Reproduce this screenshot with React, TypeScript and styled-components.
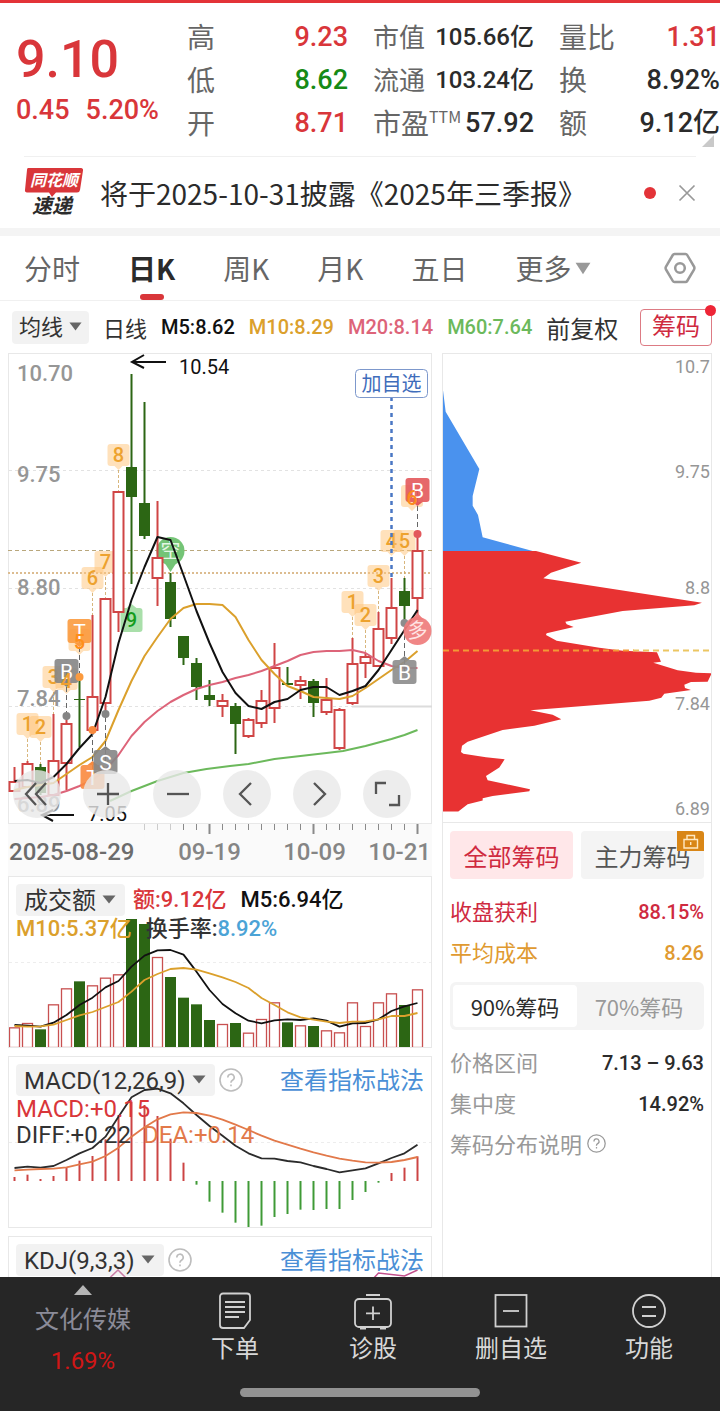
import React from 'react';
import styled, { createGlobalStyle, css } from 'styled-components';

const RED = '#d9363a';
const DEEP_RED = '#cf2a3f';
const GREEN = '#168a16';
const CANDLE_GREEN = '#2c6614';
const CANDLE_RED = '#d04545';
const GOLD = '#dba02c';
const INK = '#2b2b2b';
const LINE = '#e8e8e8';

const numeric = "Roboto, 'Noto Sans CJK SC', sans-serif";
const han = "'Noto Sans CJK SC', sans-serif";

const GlobalStyle = createGlobalStyle`
  *, *::before, *::after { box-sizing: border-box; }
  body { margin: 0; background: #fff; color: ${INK}; font-family: ${numeric}; }
  button, select { font: inherit; color: inherit; border: 0; margin: 0; padding: 0; background: none; cursor: pointer; }
  a { text-decoration: none; }
  h1, p, dl, dt, dd { margin: 0; font-weight: inherit; }
`;

/* ---------- shell ---------- */

const Shell = styled.div`
  display: flex;
  flex-direction: column;
  height: 100vh;
  background: #fff;
`;

const Scroller = styled.main`
  flex: 1;
  min-height: 0;
  overflow-y: auto;
  overflow-x: hidden;
  scrollbar-width: none;
  border-top: 3px solid #e33338;
`;

/* ---------- quote ---------- */

const Quote = styled.section`
  position: relative;
  display: grid;
  grid-template-columns: 146fr 161fr 161fr 161fr;
  column-gap: 25px;
  padding: 12px 0 12px 16px;
`;

const PriceBlock = styled.div`
  display: flex;
  flex-direction: column;
  gap: 4px;
  padding-top: 15px;
  color: ${RED};
  font-weight: 500;
  white-space: nowrap;
`;

const Price = styled.h1`
  font-size: 52px;
  line-height: 60px;
  font-weight: 500;
`;

const Change = styled.p`
  display: flex;
  gap: 16px;
  font-size: 27px;
  line-height: 32px;
`;

const StatList = styled.dl`
  min-width: 0;
`;

const Stat = styled.div`
  display: flex;
  justify-content: space-between;
  align-items: center;
  height: 43px;
  white-space: nowrap;
`;

const StatLabel = styled.dt<{ $compact?: boolean }>`
  padding-bottom: 2px;
  font-family: ${han};
  font-size: ${p => (p.$compact ? 26 : 28)}px;
  line-height: 40px;
  color: #666;
  display: flex;
`;

const Sup = styled.sup`
  font-size: 16px;
  line-height: 28px;
  vertical-align: top;
`;

const StatValue = styled.dd<{ $color?: string; $compact?: boolean }>`
  font-size: ${p => (p.$compact ? 24 : 27)}px;
  line-height: 40px;
  font-weight: 500;
  color: ${p => p.$color ?? INK};
`;

const Corner = styled.svg`
  position: absolute;
  right: 6px;
  bottom: 9px;
`;

/* ---------- news ---------- */

const News = styled.section`
  display: flex;
  align-items: center;
  height: 72px;
  margin: 0 24px;
  border-top: 1px solid #f0f0f0;
`;

const NewsLink = styled.a`
  flex: 1;
  min-width: 0;
  margin-left: 16px;
  font-family: ${han};
  font-size: 28px;
  line-height: 40px;
  color: ${INK};
  white-space: nowrap;
  overflow: hidden;
`;

const UnreadDot = styled.span`
  width: 12px;
  height: 12px;
  border-radius: 50%;
  background: #e33338;
`;

const CloseButton = styled.button`
  display: flex;
  margin-left: 22px;
`;

const Band = styled.div`
  height: 8px;
  background: #f4f4f4;
`;

/* ---------- tabs ---------- */

const Tabs = styled.nav`
  display: flex;
  align-items: center;
  gap: 48px;
  height: 65px;
  padding: 0 24px;
  border-bottom: 1px solid #f0f0f0;
`;

const Tab = styled.button<{ $active?: boolean }>`
  position: relative;
  display: flex;
  align-items: center;
  gap: 4px;
  height: 64px;
  font-family: ${han};
  font-size: 28px;
  white-space: nowrap;
  color: ${p => (p.$active ? INK : '#666')};
  font-weight: ${p => (p.$active ? 700 : 400)};
  ${p =>
    p.$active &&
    css`
      &::after {
        content: '';
        position: absolute;
        left: 50%;
        bottom: 0;
        width: 24px;
        height: 6px;
        margin-left: -12px;
        border-radius: 3px;
        background: ${RED};
      }
    `}
`;

const SettingsButton = styled.button`
  display: flex;
  margin-left: auto;
`;

/* ---------- moving average legend ---------- */

const Legend = styled.div`
  display: flex;
  align-items: center;
  gap: 14px;
  height: 52px;
  padding: 0 8px 0 12px;
  white-space: nowrap;
`;

const LegendValue = styled.span<{ $color: string }>`
  font-size: 20px;
  font-weight: 500;
  color: ${p => p.$color};
`;

const LegendText = styled.span<{ $large?: boolean }>`
  font-size: ${p => (p.$large ? 24 : 22)}px;
  color: #333;
`;

const SelectWrap = styled.label<{ $small?: boolean }>`
  position: relative;
  display: inline-flex;
  flex: none;
  & > select {
    appearance: none;
    height: ${p => (p.$small ? 33 : 32)}px;
    padding: ${p => (p.$small ? '2px 25px 0 7px' : '2px 29px 0 8px')};
    border-radius: 4px;
    background: rgba(0, 0, 0, 0.05);
    font-size: ${p => (p.$small ? 22 : 24)}px;
    line-height: 30px;
    color: #333;
  }
  & > svg {
    position: absolute;
    right: ${p => (p.$small ? 7 : 9)}px;
    top: 11px;
    pointer-events: none;
  }
`;

const ChipsToggle = styled.button`
  position: relative;
  flex: none;
  width: 72px;
  height: 37px;
  margin-left: auto;
  border: 1px solid #dd7b84;
  border-radius: 4px;
  font-size: 24px;
  line-height: 34px;
  color: ${DEEP_RED};
  &::after {
    content: '';
    position: absolute;
    top: -5px;
    right: -5px;
    width: 11px;
    height: 11px;
    border-radius: 50%;
    background: #ee2536;
  }
`;

/* ---------- charts ---------- */

const Board = styled.div`
  display: grid;
  grid-template-columns: minmax(0, 424fr) minmax(0, 270fr);
  column-gap: 10px;
  align-items: stretch;
  padding: 0 8px;
`;

const ChartColumn = styled.div`
  display: flex;
  flex-direction: column;
`;

const Stack = styled.section<{ $framed?: boolean }>`
  display: grid;
  & > * {
    grid-area: 1 / 1;
    min-width: 0;
  }
  ${p =>
    p.$framed &&
    css`
      margin-bottom: 8px;
      outline: 1px solid ${LINE};
      outline-offset: -1px;
    `}
`;

const ChartSvg = styled.svg`
  display: block;
  width: 100%;
  height: auto;
  font-family: ${numeric};
`;

const ToolRow = styled.div`
  align-self: start;
  display: flex;
  gap: 22px;
  padding: 417px 0 0 5px;
`;

const ToolButton = styled.button`
  display: flex;
  align-items: center;
  justify-content: center;
  width: 48px;
  height: 48px;
  border-radius: 50%;
  background: rgba(232, 232, 232, 0.8);
`;

const PanelHead = styled.div`
  align-self: start;
  padding: 8px 8px 0;
  white-space: nowrap;
`;

const HeadRow = styled.div<{ $gap?: number }>`
  display: flex;
  align-items: center;
  gap: ${p => p.$gap ?? 8}px;
`;

const Reading = styled.span<{ $color: string; $large?: boolean }>`
  font-size: ${p => (p.$large ? 24 : 22)}px;
  line-height: 26px;
  font-weight: ${p => (p.$large ? 400 : 500)};
  color: ${p => p.$color};
`;

const HelpButton = styled.button`
  display: flex;
  margin-left: -4px;
`;

const GuideLink = styled.a`
  margin-left: auto;
  padding-top: 2px;
  font-size: 24px;
  line-height: 30px;
  color: #4a8fd6;
`;

/* ---------- chip distribution ---------- */

const ChipColumn = styled.aside`
  border: solid ${LINE};
  border-width: 0 1px;
`;

const ChipBody = styled.div`
  padding: 8px 7px;
`;

const ChipTabs = styled.div`
  display: flex;
  gap: 8px;
  margin-bottom: 12px;
`;

const ChipTab = styled.button<{ $active?: boolean }>`
  position: relative;
  flex: 1;
  height: 48px;
  border-radius: 4px;
  font-size: 24px;
  white-space: nowrap;
  color: ${p => (p.$active ? DEEP_RED : '#555')};
  background: ${p => (p.$active ? '#ffe7e9' : '#f4f4f4')};
`;

const LockBadge = styled.svg`
  position: absolute;
  top: 0;
  right: 0;
`;

const Fact = styled.div<{ $color: string }>`
  display: flex;
  align-items: center;
  justify-content: space-between;
  height: 41px;
  color: ${p => p.$color};
  white-space: nowrap;
`;

const FactLabel = styled.dt`
  padding-bottom: 4px;
  font-family: ${han};
  font-size: 22px;
`;

const FactValue = styled.dd<{ $dark?: boolean }>`
  font-size: 20px;
  font-weight: 500;
  ${p => p.$dark && `color: ${INK};`}
`;

const Segments = styled.div`
  display: flex;
  height: 48px;
  margin: 9px 0 12px;
  padding: 3px;
  border-radius: 6px;
  background: #f4f4f4;
`;

const Segment = styled.button<{ $active?: boolean }>`
  flex: 1;
  border-radius: 4px;
  font-family: ${han};
  font-size: 22px;
  white-space: nowrap;
  color: ${p => (p.$active ? INK : '#999')};
  background: ${p => (p.$active ? '#fff' : 'transparent')};
`;

const Explain = styled.button`
  display: flex;
  align-items: center;
  gap: 5px;
  height: 41px;
  padding-bottom: 3px;
  font-family: ${han};
  font-size: 22px;
  color: #999;
  white-space: nowrap;
`;

/* ---------- bottom bar ---------- */

const BottomBar = styled.footer`
  background: #262626;
  padding-bottom: 14px;
`;

const Actions = styled.nav`
  display: grid;
  grid-template-columns: 166fr 138fr 138fr 138fr 138fr 2fr;
  height: 111px;
`;

const Sector = styled.button`
  display: flex;
  flex-direction: column;
  align-items: center;
  padding-top: 8px;
  color: #8b8b98;
  font-size: 24px;
`;

const SectorName = styled.span`
  line-height: 32px;
  margin-top: 9px;
`;

const SectorChange = styled.span`
  line-height: 32px;
  margin-top: 9px;
  color: #d01616;
`;

const Action = styled.button`
  display: flex;
  flex-direction: column;
  align-items: center;
  gap: 2px;
  padding-top: 14px;
  color: #d8d8d8;
  font-size: 24px;
  line-height: 32px;
`;

const HomeIndicator = styled.div`
  width: 240px;
  height: 9px;
  margin: 0 auto;
  border-radius: 5px;
  background: #929292;
`;

/* ---------- small pieces ---------- */

const Caret = ({ width = 14, height = 9, color = '#666' }) => (
  <svg width={width} height={height} viewBox="0 0 14 9" preserveAspectRatio="none" aria-hidden="true">
    <path d="M0.5 0.5H13.5L7 8.5Z" fill={color} />
  </svg>
);

const Help = ({ size = 24, color = '#bdbdbd' }) => (
  <svg width={size} height={size} viewBox="0 0 24 24" fill="none" stroke={color} strokeWidth="1.6" aria-hidden="true">
    <circle cx="12" cy="12" r="11" />
    <path d="M8.8 9.4a3.2 3.2 0 1 1 4.7 2.8c-1 .6-1.5 1.100-1.500 2.100v.5" />
    <path d="M12 16.500v1.800" />
  </svg>
);

type PickerProps = { label: string; options: string[]; small?: boolean };

const Picker = ({ label, options, small }: PickerProps) => (
  <SelectWrap $small={small}>
    <select aria-label={label}>
      {options.map(o => (
        <option key={o}>{o}</option>
      ))}
    </select>
    <Caret width={small ? 13 : 14} />
  </SelectWrap>
);

/* ---------- candle chart ---------- */

const STEP = 13;
const cx = (i: number) => 14.5 + STEP * i;

// [rising, high, body top, body bottom, low]
const candles: [0 | 1, number, number, number, number][] = [
  [1, 767, 782, 791, 791], [1, 761, 764, 787, 787], [0, 764, 767, 793, 795], [1, 714, 761, 795, 795],
  [1, 714, 724, 763, 790], [0, 676, 699, 700, 747], [1, 615, 697, 730, 732], [1, 598, 599, 703, 714],
  [1, 491, 492, 612, 632], [0, 374, 467, 497, 584], [0, 402, 503, 536, 539], [1, 501, 558, 578, 606],
  [0, 573, 582, 619, 627], [0, 636, 636, 658, 665], [0, 658, 663, 687, 700], [0, 680, 695, 700, 706],
  [1, 694, 701, 706, 717], [0, 703, 706, 724, 754], [1, 718, 720, 736, 738], [1, 690, 701, 723, 728],
  [1, 643, 668, 708, 723], [0, 667, 683, 685, 685], [1, 676, 681, 685, 699], [0, 679, 681, 703, 717],
  [1, 678, 700, 712, 715], [1, 708, 710, 748, 750], [1, 638, 664, 703, 705], [1, 653, 657, 663, 678],
  [1, 612, 629, 666, 666], [1, 578, 608, 638, 644], [0, 578, 591, 606, 625], [1, 534, 551, 598, 620],
];

const ma5 = [781, 780, 783, 777, 764, 748, 734, 697, 643, 600, 567, 537, 540, 575, 611, 643, 672, 693, 706, 709, 702, 699, 690, 687, 687, 695, 691, 686, 670, 650, 630, 610];
const ma10 = [790, 787, 785, 783, 774, 765, 757, 741, 710, 681, 656, 637, 619, 608, 604, 604, 605, 617, 640, 660, 674, 686, 691, 697, 698, 699, 696, 688, 679, 670, 662, 651];
const ma20 = [799, 798, 797, 795, 791, 786, 780, 770, 755, 736, 722, 711, 702, 695, 689, 685, 682, 678, 675, 671, 666, 661, 655, 652, 651, 651, 650, 653, 661, 666, 668, 668];

const linePoints = (values: number[]) => values.map((v, i) => `${cx(i)},${v}`).join(' ');

type LabelProps = { x: number; y: number; size?: number; color: string; anchor?: 'start' | 'middle' | 'end'; weight?: number; children: string };

const Label = ({ x, y, size = 22, color, anchor = 'start', weight = 400, children }: LabelProps) => (
  <text x={x} y={y + Math.round(size * 0.36)} fontSize={size} fill={color} textAnchor={anchor} fontWeight={weight}>
    {children}
  </text>
);

const CountTag = ({ x, y, n, to }: { x: number; y: number; n?: string; to?: number }) => (
  <g>
    {to && <path d={`M${x} ${y + 15}V${to}`} stroke="#cfa45c" strokeDasharray="3 2" opacity="0.8" />}
    <path
      d={`M${x - 8} ${y - 11}h16a3 3 0 0 1 3 3v16a3 3 0 0 1-3 3h-4l-4 4l-4-4h-4a3 3 0 0 1-3-3v-16a3 3 0 0 1 3-3z`}
      fill="#ffc478"
      fillOpacity="0.5"
    />
    {n && <Label x={x} y={y} size={20} color="#eda22e" anchor="middle" weight={500}>{n}</Label>}
  </g>
);

type TradeProps = { x: number; y: number; mark: string; color: string; dot: number; up?: boolean };

const TradeTag = ({ x, y, mark, color, dot, up }: TradeProps) => (
  <g>
    <path d={`M${x} ${y}V${dot}`} stroke="#666" strokeDasharray="5 3" />
    <circle cx={x} cy={dot} r="4" fill={color} />
    <rect x={x - 12} y={y - 12} width="24" height="24" rx="3" fill={color} fillOpacity="0.9" />
    <path d={up ? `M${x - 5} ${y - 12}l5-4l5 4z` : `M${x - 5} ${y + 12}l5 4l5-4z`} fill={color} />
    <Label x={x} y={y} size={21} color="#fff" anchor="middle">{mark}</Label>
  </g>
);

const axis: [string, number][] = [['10.70', 373], ['9.75', 474], ['8.80', 587], ['7.84', 698], ['6.89', 804]];

const CandleChart = () => (
  <ChartSvg viewBox="8 353 424 523" role="img" aria-label="日K线图">
    <rect x="8" y="824" width="424" height="52" fill="#fafafa" />
    <rect x="8.500" y="353.500" width="423" height="470" fill="#fff" stroke={LINE} />
    <g stroke="#e2e2e2" strokeDasharray="3 3">
      <path d="M9 470.500H432" />
      <path d="M9 588.500H432" />
      <path d="M9 706.500H352" />
    </g>
    <path d="M352 706.500H432" stroke="#dcdcdc" strokeWidth="2" />
    <path d="M8 550.500H432" stroke="#b9a77c" strokeDasharray="4 3" />
    <path d="M8 573H432" stroke="#dcbc90" strokeWidth="2" strokeDasharray="2 2" />
    {axis.map(([t, y]) => (
      <Label key={t} x={17} y={y} color="#969696" weight={500}>{t}</Label>
    ))}

    <CountTag x={27.5} y={724} n="1" to={761} />
    <CountTag x={40.5} y={727} n="2" to={764} />
    <CountTag x={53.5} y={677} n="3" to={714} />
    <CountTag x={92.5} y={578} n="6" to={615} />
    <CountTag x={105.5} y={562} n="7" to={598} />
    <CountTag x={118.5} y={455} n="8" to={491} />
    <CountTag x={352.5} y={602} n="1" to={638} />
    <CountTag x={365.5} y={615} n="2" to={653} />
    <CountTag x={378.5} y={576} n="3" to={612} />
    <CountTag x={391.5} y={541} n="4" />
    <CountTag x={404.5} y={541} n="5" to={578} />
    <path d="M391.500 397V578" stroke="#4a77c4" strokeWidth="2.500" strokeDasharray="4 4" />

    <g>
      <path d="M131.500 604l5 4h3a3 3 0 0 1 3 3v18a3 3 0 0 1-3 3h-16a3 3 0 0 1-3-3v-18a3 3 0 0 1 3-3h3z" fill="#a9dfaa" />
      <Label x={131.5} y={620} size={20} color="#139c1c" anchor="middle" weight={500}>9</Label>
    </g>
    <g>
      <path d="M164 562h13l-6.500 10z" fill="#74c476" />
      <circle cx="170.500" cy="551" r="14" fill="#74c476" />
      <text x="170.500" y="558" fontSize="20" fill="#e4f6e4" textAnchor="middle">空</text>
    </g>

    {candles.map(([rising, high, top, bottom, low], i) => {
      const color = rising ? CANDLE_RED : CANDLE_GREEN;
      return (
        <g key={i} stroke={color} strokeWidth="2">
          <path d={`M${cx(i)} ${high}V${top}M${cx(i)} ${bottom}V${low}`} />
          {rising ? (
            <rect x={cx(i) - 5} y={top} width="10" height={bottom - top} fill="#fff" />
          ) : (
            <rect x={cx(i) - 5.5} y={top} width="11" height={bottom - top} fill={color} stroke="none" />
          )}
        </g>
      );
    })}

    <g fill="none" strokeWidth="2" strokeLinejoin="round">
      <polyline points="110,801 131.500,791 157.500,781 183.500,773 206.500,769 230,766 248.500,764 274.500,759 300.500,756 326.500,753 343,751 365.500,746 391.500,739 404.500,735 417.500,730" stroke="#6cb95c" />
      <polyline points={linePoints(ma20)} stroke="#dd6479" />
      <polyline points={linePoints(ma10)} stroke={GOLD} />
      <polyline points={linePoints(ma5)} stroke="#111" />
    </g>

    <CountTag x={66.5} y={679} />
    <CountTag x={79.5} y={640} />
    <CountTag x={412} y={496} />
    <TradeTag x={66.5} y={671} mark="B" color="#858585" dot={716} />
    <TradeTag x={79.5} y={631} mark="T" color="#fb9a3e" dot={677} />
    <TradeTag x={92.5} y={777} mark="T" color="#f98a3e" dot={730} up />
    <TradeTag x={105.5} y={762} mark="S" color="#858585" dot={714} up />
    <TradeTag x={404.5} y={672} mark="B" color="#8c8c8c" dot={623} up />
    <TradeTag x={417.5} y={490} mark="B" color="#e3585b" dot={534} />
    <Label x={66.5} y={681} size={20} color="#f0a030" anchor="middle" weight={500}>4</Label>
    <Label x={79.5} y={642} size={20} color="#ff8f1a" anchor="middle" weight={500}>5</Label>
    <Label x={412} y={498} size={20} color="#fb8b1e" anchor="middle" weight={500}>6</Label>
    <g>
      <path d="M411 620l6.500-7l6.500 7z" fill="#ef8080" />
      <circle cx="417.500" cy="631" r="14" fill="#ef7c7c" fillOpacity="0.92" />
      <text x="417.500" y="638" fontSize="20" fill="#ffe4e4" textAnchor="middle">多</text>
    </g>

    <rect x="355.500" y="369.500" width="72" height="28" rx="4" fill="#fff" stroke="#7d98cc" />
    <text x="391.500" y="391" fontSize="20" fill="#3f6dbb" textAnchor="middle">加自选</text>

    <g stroke="#111" strokeWidth="2" fill="none">
      <path d="M166 362H132M144 355L132 362L144 368" />
      <path d="M74 815H42M53 810L42 815L53 821" />
    </g>
    <Label x={179} y={367} size={20} color="#111">10.54</Label>
    <Label x={88} y={814} size={20} color="#111">7.05</Label>

    {candles.map((_, i) =>
      i < 10 ? null : (
        <path
          key={i}
          d={`M${cx(i)} 824v${(i - 15) % 8 === 0 ? 10 : 6}`}
          stroke={i < 13 ? '#ccc' : '#8a8a8a'}
          strokeWidth={(i - 15) % 8 === 0 ? 2 : 1}
        />
      ),
    )}
    <Label x={9} y={851} size={24} color="#6c6c6c" weight={500}>2025-08-29</Label>
    <Label x={209.5} y={851} size={24} color="#858585" anchor="middle" weight={500}>09-19</Label>
    <Label x={314.5} y={851} size={24} color="#858585" anchor="middle" weight={500}>10-09</Label>
    <Label x={431} y={851} size={24} color="#858585" anchor="end" weight={500}>10-21</Label>
  </ChartSvg>
);

/* ---------- indicator charts ---------- */

// Indicator series are kept at three steps per chart unit.
const unit = (v: number) => v / 3;
const seriesPoints = (values: number[]) => values.map((v, i) => `${cx(i)},${unit(v)}`).join(' ');

const turnover = [472, 459, 478, 403, 355, 334, 346, 323, 313, 147, 162, 261, 321, 383, 403, 450, 462, 459, 488, 447, 397, 457, 466, 468, 481, 487, 397, 468, 397, 370, 405, 358];
const turnoverM5 = [465, 467, 470, 458, 435, 405, 383, 352, 333, 290, 257, 241, 240, 254, 305, 360, 402, 430, 452, 460, 451, 448, 450, 445, 452, 470, 460, 459, 448, 423, 409, 399];
const turnoverM10 = [468, 470, 469, 464, 450, 436, 426, 411, 396, 365, 330, 312, 297, 294, 299, 310, 322, 336, 354, 384, 405, 427, 442, 449, 455, 459, 455, 454, 448, 438, 438, 429];

const VolumeChart = () => (
  <ChartSvg viewBox="8 6 424 172" role="img" aria-label="成交额">
    <path d="M9 92.500H432" stroke="#ededed" strokeDasharray="3 3" />
    {turnover.map((v, i) =>
      candles[i][0] ? (
        <rect key={i} x={cx(i) - 5} y={unit(v) + 0.5} width="10" height={177 - unit(v)} fill="#fff" stroke="#c85050" strokeWidth="1.300" />
      ) : (
        <rect key={i} x={cx(i) - 5.5} y={unit(v)} width="11" height={178 - unit(v)} fill={CANDLE_GREEN} />
      ),
    )}
    <g fill="none" strokeWidth="1.800" strokeLinejoin="round">
      <polyline points={seriesPoints(turnoverM5)} stroke="#111" />
      <polyline points={seriesPoints(turnoverM10)} stroke={GOLD} />
    </g>
  </ChartSvg>
);

const macd = [921, 914, 927, 918, 893, 872, 858, 808, 735, 695, 705, 738, 806, 878, 944, 995, 1028, 1058, 1072, 1067, 1041, 1032, 1019, 1020, 1017, 1017, 990, 966, 938, 909, 893, 859];
const diff = [894, 890, 893, 888, 870, 850, 834, 800, 740, 682, 660, 656, 670, 700, 735, 768, 797, 827, 850, 865, 866, 873, 877, 888, 897, 907, 901, 895, 880, 864, 850, 824];
const dea = [901, 899, 897, 896, 892, 883, 875, 858, 833, 800, 772, 748, 733, 727, 729, 737, 749, 764, 780, 797, 812, 824, 836, 847, 857, 866, 872, 877, 878, 876, 870, 861];
const MACD_ZERO = 933;

const MacdChart = () => (
  <ChartSvg viewBox="8 186 424 172" role="img" aria-label="MACD">
    <path d="M9 272.500H432" stroke="#ededed" strokeDasharray="3 3" />
    {macd.map((v, i) => (
      <path
        key={i}
        d={`M${cx(i)} ${unit(MACD_ZERO)}V${unit(v)}`}
        stroke={v < MACD_ZERO ? '#cc4444' : '#3f9a36'}
        strokeWidth="2"
      />
    ))}
    <g fill="none" strokeWidth="1.800" strokeLinejoin="round">
      <polyline points={seriesPoints(diff)} stroke="#2b2b2b" />
      <polyline points={seriesPoints(dea)} stroke="#e2794a" />
    </g>
  </ChartSvg>
);

const KdjChart = () => (
  <ChartSvg viewBox="8 366 424 172" role="img" aria-label="KDJ">
    <g fill="none" stroke="#c2508c" strokeWidth="1.500">
      <path d="M105.500 412L118 400L130 412" opacity="0.7" />
      <path d="M372 410L378.500 403L404.500 406L417.500 400" />
    </g>
  </ChartSvg>
);

/* ---------- chip distribution chart ---------- */

const chipAxis: [string, number][] = [['10.7', 367], ['9.75', 472], ['8.8', 588], ['7.84', 704], ['6.89', 809]];

const ChipChart = () => (
  <ChartSvg viewBox="443 353 268 470" role="img" aria-label="筹码分布">
    <path d="M443 353.500H711M443 822.500H711" stroke={LINE} />
    <g transform="translate(436 350) scale(0.3333)">
      <path d="M19 105L29 185L130 357L110 438V467L126 495L140 562L290 603H19Z" fill="#4a92ee" />
      <path
        d="M19 603H300L436 638L345 668L322 685L798 758L775 766L560 783L388 815L392 823L413 831L332 850L330 855L362 872L490 893L560 902L663 907L675 935L652 938L725 961L780 968L827 970L815 995L765 996L745 1004L747 1014L765 1020L685 1031L676 1043L640 1052L283 1081L350 1094L376 1108L295 1127L200 1140L95 1175L78 1187L75 1206L82 1211L150 1222L206 1228L190 1253L150 1278L155 1291L282 1318L280 1324L170 1338L140 1345V1352L95 1363L67 1385H19Z"
        fill="#e83232"
      />
    </g>
    <path d="M443 650.500H634" stroke="#f39a35" strokeWidth="2" strokeDasharray="6 4" />
    <path d="M633 650.500H711" stroke="#ecc662" strokeWidth="2" strokeDasharray="6 4" />
    {chipAxis.map(([t, y]) => (
      <Label key={t} x={710} y={y} size={18} color="#969696" anchor="end">{t}</Label>
    ))}
  </ChartSvg>
);

/* ---------- page ---------- */

const toolIcons: [string, string][] = [
  ['最早', 'M23 13L13 24L23 35M33 13L23 24L33 35'],
  ['放大', 'M25 13V35M14 24H36'],
  ['缩小', 'M14 24H36'],
  ['左移', 'M28 13L17 24L28 35'],
  ['右移', 'M21 13L32 24L21 35'],
  ['全屏', 'M13 24V13H23M36 25V35H26'],
];

const stats: { label: string; sup?: string; value: string; color?: string; compact?: boolean }[][] = [
  [
    { label: '高', value: '9.23', color: RED },
    { label: '低', value: '8.62', color: GREEN },
    { label: '开', value: '8.71', color: RED },
  ],
  [
    { label: '市值', value: '105.66亿', compact: true },
    { label: '流通', value: '103.24亿', compact: true },
    { label: '市盈', sup: 'TTM', value: '57.92' },
  ],
  [
    { label: '量比', value: '1.31', color: RED },
    { label: '换', value: '8.92%' },
    { label: '额', value: '9.12亿' },
  ],
];

export default function App() {
  return (
    <Shell>
      <GlobalStyle />
      <Scroller>
        <Quote>
          <PriceBlock>
            <Price>9.10</Price>
            <Change>
              <span>0.45</span>
              <span>5.20%</span>
            </Change>
          </PriceBlock>
          {stats.map((group, i) => (
            <StatList key={i}>
              {group.map(s => (
                <Stat key={s.label}>
                  <StatLabel $compact={s.compact}>
                    {s.label}
                    {s.sup && <Sup>{s.sup}</Sup>}
                  </StatLabel>
                  <StatValue $color={s.color} $compact={s.compact}>{s.value}</StatValue>
                </Stat>
              ))}
            </StatList>
          ))}
          <Corner width="12" height="12" aria-hidden="true">
            <path d="M12 0V12H0Z" fill="#c9c9c9" />
          </Corner>
        </Quote>

        <News>
          <svg width="60" height="56" viewBox="0 0 60 56" role="img" aria-label="同花顺速递">
            <path d="M4 3H57a2 2 0 0 1 2 2.500L56 25a3 3 0 0 1-3 2.500H32L28 32L25 27.500H3a2 2 0 0 1-2-2.500L3 5a2 2 0 0 1 1-2z" fill={RED} />
            <text x="30" y="21" fontFamily={han} fontSize="16" fontWeight="700" fontStyle="italic" fill="#fff" textAnchor="middle">同花顺</text>
            <text x="28" y="48" fontFamily={han} fontSize="20" fontWeight="700" fontStyle="italic" fill={INK} textAnchor="middle">速递</text>
          </svg>
          <NewsLink href="#news">将于2025-10-31披露《2025年三季报》</NewsLink>
          <UnreadDot />
          <CloseButton aria-label="关闭">
            <svg width="18" height="18" fill="none" stroke="#999" strokeWidth="1.700">
              <path d="M1.500 1.500L16.500 16.500M16.500 1.500L1.500 16.500" />
            </svg>
          </CloseButton>
        </News>
        <Band />

        <Tabs>
          <Tab>分时</Tab>
          <Tab $active aria-current="page">日K</Tab>
          <Tab>周K</Tab>
          <Tab>月K</Tab>
          <Tab>五日</Tab>
          <Tab aria-haspopup="menu">
            更多
            <Caret width={16} height={13} color="#999" />
          </Tab>
          <SettingsButton aria-label="设置">
            <svg width="32" height="32" viewBox="0 0 32 32" fill="none" stroke="#999" strokeWidth="2.500" strokeLinejoin="round">
              <path d="M10.500 2H21.500a2 2 0 0 1 1.700 1L30 14.500a3 3 0 0 1 0 3L23.200 29a2 2 0 0 1-1.700 1H10.500a2 2 0 0 1-1.700-1L2 17.500a3 3 0 0 1 0-3L8.800 3a2 2 0 0 1 1.700-1z" />
              <circle cx="16" cy="16" r="4.800" />
            </svg>
          </SettingsButton>
        </Tabs>

        <Legend>
          <Picker small label="主图指标" options={['均线']} />
          <LegendText>日线</LegendText>
          <LegendValue $color="#111">M5:8.62</LegendValue>
          <LegendValue $color={GOLD}>M10:8.29</LegendValue>
          <LegendValue $color="#dd6479">M20:8.14</LegendValue>
          <LegendValue $color="#6cb95c">M60:7.64</LegendValue>
          <LegendText $large>前复权</LegendText>
          <ChipsToggle aria-pressed="true">筹码</ChipsToggle>
        </Legend>

        <Board>
          <ChartColumn>
            <Stack>
              <CandleChart />
              <ToolRow>
                {toolIcons.map(([name, d]) => (
                  <ToolButton key={name} aria-label={name}>
                    <svg width="48" height="48" fill="none" stroke="#555" strokeWidth="2.300">
                      <path d={d} />
                    </svg>
                  </ToolButton>
                ))}
              </ToolRow>
            </Stack>

            <Stack $framed>
              <VolumeChart />
              <PanelHead>
                <HeadRow>
                  <Picker label="副图指标一" options={['成交额']} />
                  <HeadRow $gap={14}>
                    <Reading $color={RED}>额:9.12亿</Reading>
                    <Reading $color="#111">M5:6.94亿</Reading>
                  </HeadRow>
                </HeadRow>
                <HeadRow $gap={14}>
                  <Reading $color={GOLD}>M10:5.37亿</Reading>
                  <HeadRow $gap={0}>
                    <Reading $color="#333">换手率:</Reading>
                    <Reading $color="#4ba3d6">8.92%</Reading>
                  </HeadRow>
                </HeadRow>
              </PanelHead>
            </Stack>

            <Stack $framed>
              <MacdChart />
              <PanelHead>
                <HeadRow>
                  <Picker label="副图指标二" options={['MACD(12,26,9)']} />
                  <HelpButton aria-label="MACD说明"><Help /></HelpButton>
                  <GuideLink href="#macd">查看指标战法</GuideLink>
                </HeadRow>
                <HeadRow>
                  <Reading $large $color={RED}>MACD:+0.15</Reading>
                </HeadRow>
                <HeadRow $gap={12}>
                  <Reading $large $color="#333">DIFF:+0.22</Reading>
                  <Reading $large $color="#e2794a">DEA:+0.14</Reading>
                </HeadRow>
              </PanelHead>
            </Stack>

            <Stack $framed>
              <KdjChart />
              <PanelHead>
                <HeadRow>
                  <Picker label="副图指标三" options={['KDJ(9,3,3)']} />
                  <HelpButton aria-label="KDJ说明"><Help /></HelpButton>
                  <GuideLink href="#kdj">查看指标战法</GuideLink>
                </HeadRow>
              </PanelHead>
            </Stack>
          </ChartColumn>

          <ChipColumn>
            <ChipChart />
            <ChipBody>
              <ChipTabs>
                <ChipTab $active aria-pressed="true">全部筹码</ChipTab>
                <ChipTab aria-pressed="false">
                  主力筹码
                  <LockBadge width="27" height="20" aria-hidden="true">
                    <path d="M0 0H24a3 3 0 0 1 3 3V20H0Z" fill="#d98616" />
                    <path d="M7 8.500H20.500V17H7ZM10 8V4.500H17.500V8M13.700 11V14" fill="none" stroke="#ffe9c2" strokeWidth="1.400" />
                  </LockBadge>
                </ChipTab>
              </ChipTabs>
              <dl>
                <Fact $color={DEEP_RED}>
                  <FactLabel>收盘获利</FactLabel>
                  <FactValue>88.15%</FactValue>
                </Fact>
                <Fact $color="#e09a30">
                  <FactLabel>平均成本</FactLabel>
                  <FactValue>8.26</FactValue>
                </Fact>
              </dl>
              <Segments>
                <Segment $active aria-pressed="true">90%筹码</Segment>
                <Segment aria-pressed="false">70%筹码</Segment>
              </Segments>
              <dl>
                <Fact $color="#999">
                  <FactLabel>价格区间</FactLabel>
                  <FactValue $dark>7.13 – 9.63</FactValue>
                </Fact>
                <Fact $color="#999">
                  <FactLabel>集中度</FactLabel>
                  <FactValue $dark>14.92%</FactValue>
                </Fact>
              </dl>
              <Explain>
                筹码分布说明
                <Help size={19} color="#999" />
              </Explain>
            </ChipBody>
          </ChipColumn>
        </Board>
      </Scroller>

      <BottomBar>
        <Actions>
          <Sector>
            <svg width="18" height="10" aria-hidden="true">
              <path d="M9 0L18 10H0Z" fill="#b5b5b5" />
            </svg>
            <SectorName>文化传媒</SectorName>
            <SectorChange>1.69%</SectorChange>
          </Sector>
          <Action>
            <svg width="40" height="40" fill="none" stroke="#d0d0d0" strokeWidth="1.800">
              <path d="M8 2.500H32a3 3 0 0 1 3 3V29L29 37H8a3 3 0 0 1-3-3V5.500a3 3 0 0 1 3-3z" />
              <path d="M10 11H30M10 16H30M10 21H30M10 26H24" />
            </svg>
            下单
          </Action>
          <Action>
            <svg width="40" height="40" fill="none" stroke="#d0d0d0" strokeWidth="1.800">
              <rect x="2" y="8" width="36" height="28" rx="4" />
              <path d="M13 4H27M20 15.500V29M13 22.300H27M7 37.500H13M27 37.500H33" />
            </svg>
            诊股
          </Action>
          <Action>
            <svg width="40" height="40" fill="none" stroke="#d0d0d0" strokeWidth="1.800">
              <rect x="4.500" y="4" width="31" height="31.500" />
              <path d="M12 20H28" />
            </svg>
            删自选
          </Action>
          <Action>
            <svg width="40" height="40" fill="none" stroke="#d0d0d0" strokeWidth="1.800">
              <circle cx="20" cy="20" r="16" />
              <path d="M13 16H27M13 25H27" />
            </svg>
            功能
          </Action>
        </Actions>
        <HomeIndicator />
      </BottomBar>
    </Shell>
  );
}
